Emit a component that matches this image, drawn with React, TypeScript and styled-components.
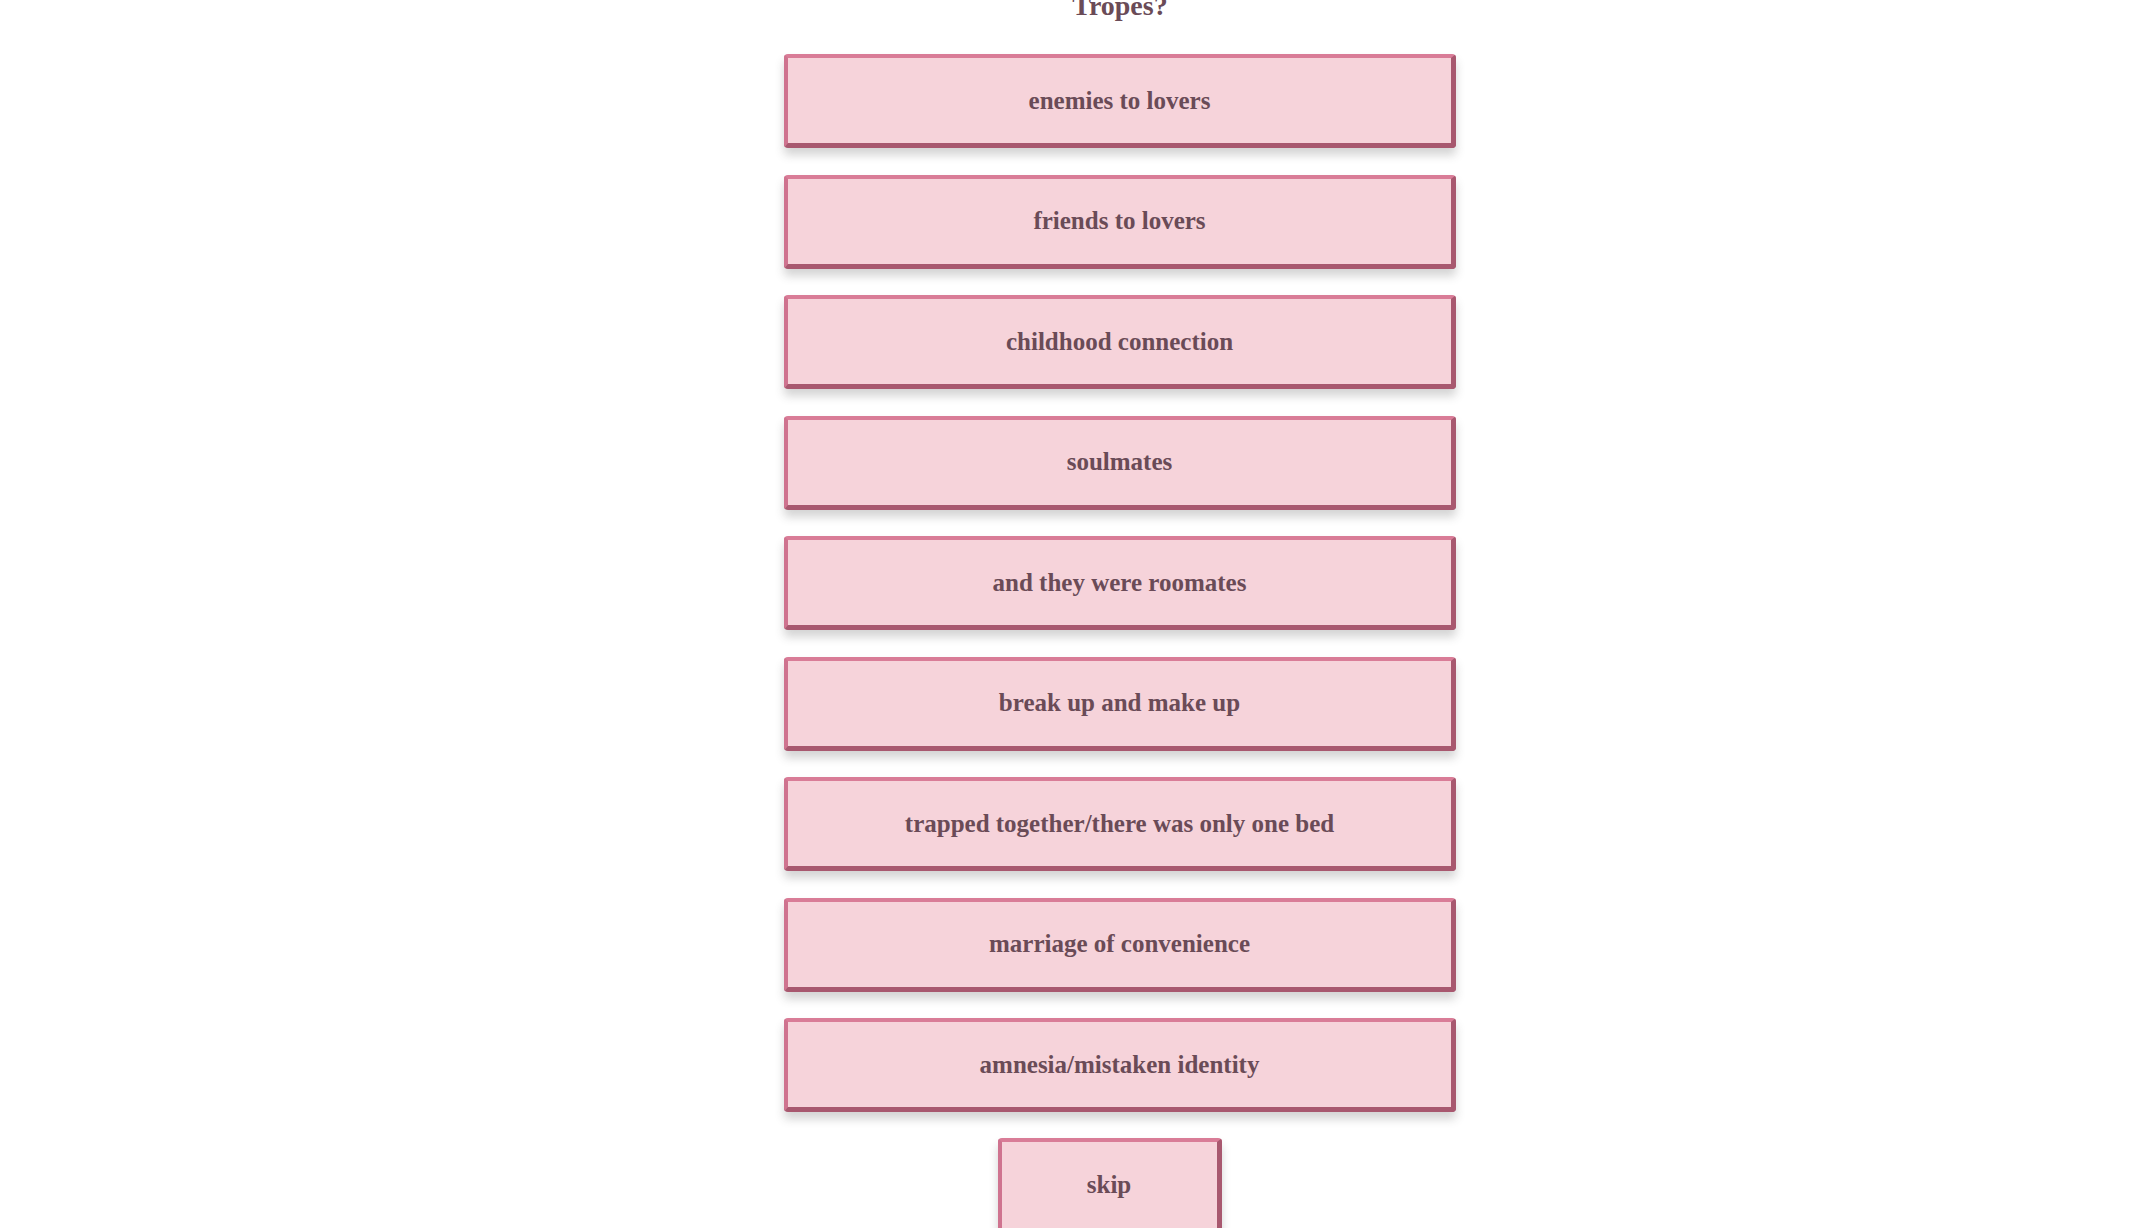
import styled, { createGlobalStyle } from "styled-components";

const tropes = [
  "enemies to lovers",
  "friends to lovers",
  "childhood connection",
  "soulmates",
  "and they were roomates",
  "break up and make up",
  "trapped together/there was only one bed",
  "marriage of convenience",
  "amnesia/mistaken identity",
];

const GlobalStyle = createGlobalStyle`
  html, body {
    margin: 0;
    padding: 0;
    background: #ffffff;
    overflow: hidden;
  }
  body {
    font-family: "Liberation Serif", "Times New Roman", serif;
  }
`;

const Page = styled.main`
  box-sizing: border-box;
  display: flex;
  flex-direction: column;
  align-items: center;
  height: 1228px;
  padding-left: 96px;
  overflow: hidden;
`;

const Heading = styled.h2`
  margin: -10px 0 0;
  font-size: 28px;
  line-height: 32px;
  font-weight: 700;
  color: #6a4b57;
`;

const Options = styled.div`
  display: flex;
  flex-direction: column;
  gap: 26.5px;
  margin-top: 32px;
`;

const Choice = styled.button<{ $narrow?: boolean }>`
  box-sizing: border-box;
  width: ${(p) => (p.$narrow ? "224px" : "672px")};
  height: 94px;
  padding: 0;
  background: #f6d3da;
  border-style: solid;
  border-width: 4px 5px 5px 4px;
  border-color: #d97c97 #a8586f #a8586f #cf738f;
  border-radius: 4px;
  box-shadow: 0 7px 10px rgba(60, 60, 60, 0.22);
  font-family: "Liberation Serif", "Times New Roman", serif;
  font-size: 25px;
  font-weight: 700;
  color: #6a4b57;
  cursor: pointer;
`;

const Skip = styled(Choice)`
  flex-shrink: 0;
  height: 110px;
  padding-bottom: 16px;
  margin-top: 26px;
  margin-right: 21px;
`;

export default function App() {
  return (
    <>
      <GlobalStyle />
      <Page>
        <Heading>Tropes?</Heading>
        <Options>
          {tropes.map((t) => (
            <Choice key={t}>{t}</Choice>
          ))}
        </Options>
        <Skip $narrow>skip</Skip>
      </Page>
    </>
  );
}
